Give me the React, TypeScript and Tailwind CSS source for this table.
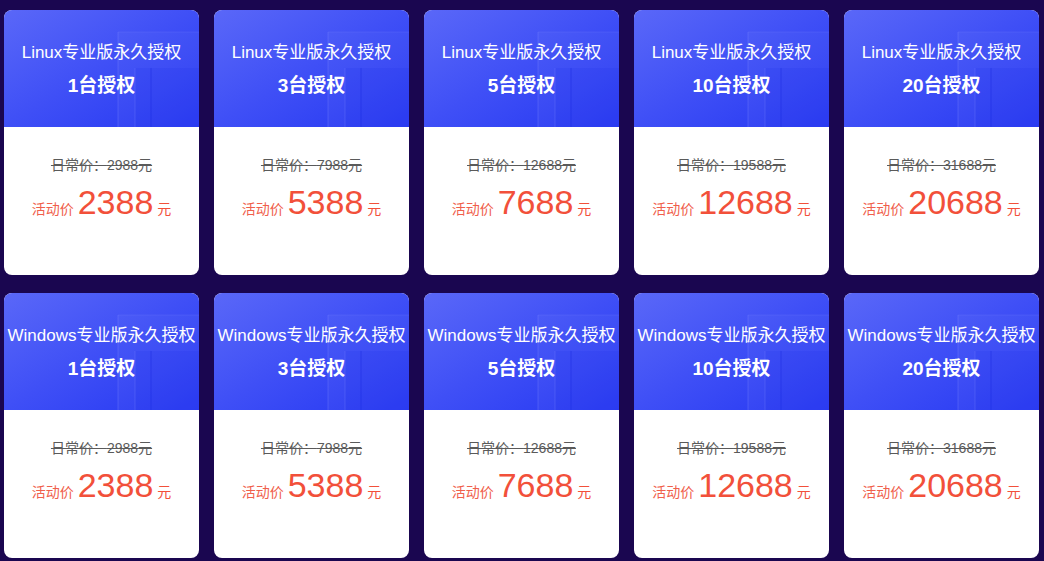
import React from 'react';

type Plan = {
  os: string;
  seats: number;
  regular: number;
  sale: number;
};

const tiers = [
  { seats: 1, regular: 2988, sale: 2388 },
  { seats: 3, regular: 7988, sale: 5388 },
  { seats: 5, regular: 12688, sale: 7688 },
  { seats: 10, regular: 19588, sale: 12688 },
  { seats: 20, regular: 31688, sale: 20688 },
];

const plans: Plan[] = ['Linux', 'Windows'].flatMap((os) =>
  tiers.map((t) => ({ os, ...t }))
);

const HeaderDecor: React.FC = () => (
  <svg
    className="absolute inset-0 w-full h-full pointer-events-none"
    viewBox="0 0 195 117"
    preserveAspectRatio="none"
  >
    {/* faint panels on the right side of the header */}
    <rect x="114" y="22" width="81" height="95" fill="#ffffff" opacity="0.035" />
    <rect x="131" y="58" width="64" height="59" fill="#1d2ee8" opacity="0.15" />
    <line x1="114" y1="22" x2="114" y2="117" stroke="#7c86ff" strokeWidth="1" opacity="0.35" />
    <line x1="131" y1="58" x2="131" y2="117" stroke="#7c86ff" strokeWidth="1" opacity="0.3" />
    <line x1="147" y1="58" x2="147" y2="117" stroke="#1b2be0" strokeWidth="1" opacity="0.45" />
    <line x1="114" y1="22" x2="195" y2="22" stroke="#7c86ff" strokeWidth="1" opacity="0.2" />
  </svg>
);

const PlanCard: React.FC<{ plan: Plan }> = ({ plan }) => (
  <div className="w-[195px] h-[265px] rounded-[8px] overflow-hidden bg-white flex flex-col">
    {/* Header */}
    <div className="relative h-[117px] bg-linear-to-br from-[#5a67f8] via-[#3f4ff6] to-[#2636f2] text-white text-center pt-[31px]">
      <HeaderDecor />
      <div className="relative text-[17px] leading-[24px] whitespace-nowrap">
        {plan.os}专业版永久授权
      </div>
      <div className="relative mt-[9px] text-[19px] leading-[24px] font-bold">
        {plan.seats}台授权
      </div>
    </div>

    {/* Prices */}
    <div className="flex-1 flex flex-col items-center pt-[28px]">
      <div className="text-[14px] leading-[20px] text-[#5a5a5a] line-through">
        日常价：{plan.regular}元
      </div>
      <div className="mt-[10px] flex items-baseline text-[#f2503a] whitespace-nowrap">
        <span className="text-[14px] text-[#f0604c]">活动价</span>
        <span className="ml-[4px] text-[34px] leading-none">{plan.sale}</span>
        <span className="ml-[4px] text-[14px]">元</span>
      </div>
    </div>
  </div>
);

const App: React.FC = () => {
  return (
    <div
      className="w-[1044px] h-[561px] bg-[#1a0650] overflow-hidden"
      style={{ fontFamily: '"Liberation Sans", "Noto Sans CJK SC", sans-serif' }}
    >
      <div className="grid grid-cols-[repeat(5,195px)] gap-x-[15px] gap-y-[18px] pl-[4px] pt-[10px]">
        {plans.map((plan) => (
          <PlanCard key={`${plan.os}-${plan.seats}`} plan={plan} />
        ))}
      </div>
    </div>
  );
};

export default App;
